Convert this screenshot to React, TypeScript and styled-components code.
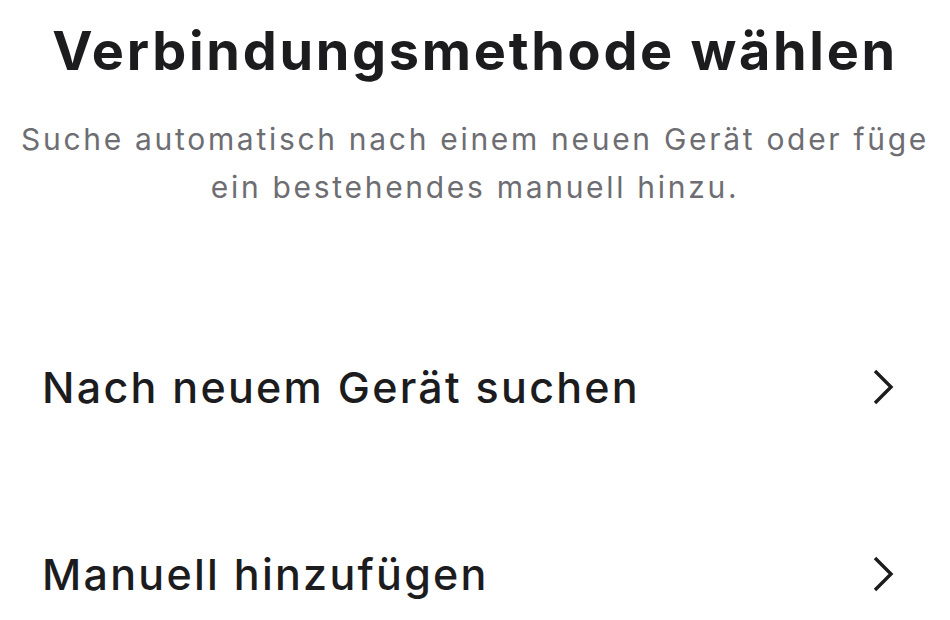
import { FC } from 'react'
import styled, { createGlobalStyle } from 'styled-components'

const GlobalStyle = createGlobalStyle`
  html, body {
    margin: 0;
    padding: 0;
    background: #ffffff;
  }
  body {
    font-family: Inter, 'Noto Sans', sans-serif;
    -webkit-font-smoothing: antialiased;
  }
`

interface MethodRowProps {
  label: string
  onSelect?: () => void
}

const Chevron: FC = () => (
  <svg width="26" height="38" viewBox="0 0 26 38" fill="none">
    <path d="M5 3 L21 19 L5 35" stroke="#1c1c1e" strokeWidth="3.4" strokeLinecap="butt" strokeLinejoin="miter" />
  </svg>
)

const MethodRow: FC<MethodRowProps> = ({ label, onSelect }) => (
  <Row onClick={onSelect}>
    <RowLabel>{label}</RowLabel>
    <Chevron />
  </Row>
)

const App: FC = () => {
  return (
    <>
      <GlobalStyle />
      <Screen>
        <Header>
          <Title>Verbindungsmethode wählen</Title>
          <Subtitle>
            Suche automatisch nach einem neuen Gerät oder füge
            <br />
            ein bestehendes manuell hinzu.
          </Subtitle>
        </Header>
        <MethodList>
          <MethodRow label="Nach neuem Gerät suchen" />
          <MethodRow label="Manuell hinzufügen" />
        </MethodList>
      </Screen>
    </>
  )
}

const Screen = styled.div`
  width: 950px;
  height: 620px;
  overflow: hidden;
  display: flex;
  flex-direction: column;
`

const Header = styled.div`
  display: flex;
  flex-direction: column;
  align-items: center;
  padding-top: 17px;
`

const Title = styled.h1`
  margin: 0;
  font-size: 54px;
  line-height: 68px;
  font-weight: 700;
  color: #1c1c1e;
  letter-spacing: 2.7px;
  white-space: nowrap;
`

const Subtitle = styled.p`
  margin: 30px 0 0;
  font-size: 30px;
  line-height: 48px;
  font-weight: 400;
  color: #6d6d72;
  text-align: center;
  letter-spacing: 2.7px;
  white-space: nowrap;
`

const MethodList = styled.div`
  display: flex;
  flex-direction: column;
  margin-top: 82px;
`

const Row = styled.div`
  display: flex;
  align-items: center;
  justify-content: space-between;
  height: 187px;
  padding: 0 54px 0 42px;
  cursor: pointer;
`

const RowLabel = styled.span`
  font-size: 43px;
  font-weight: 500;
  color: #1c1c1e;
  letter-spacing: 2.25px;
`

export default App
